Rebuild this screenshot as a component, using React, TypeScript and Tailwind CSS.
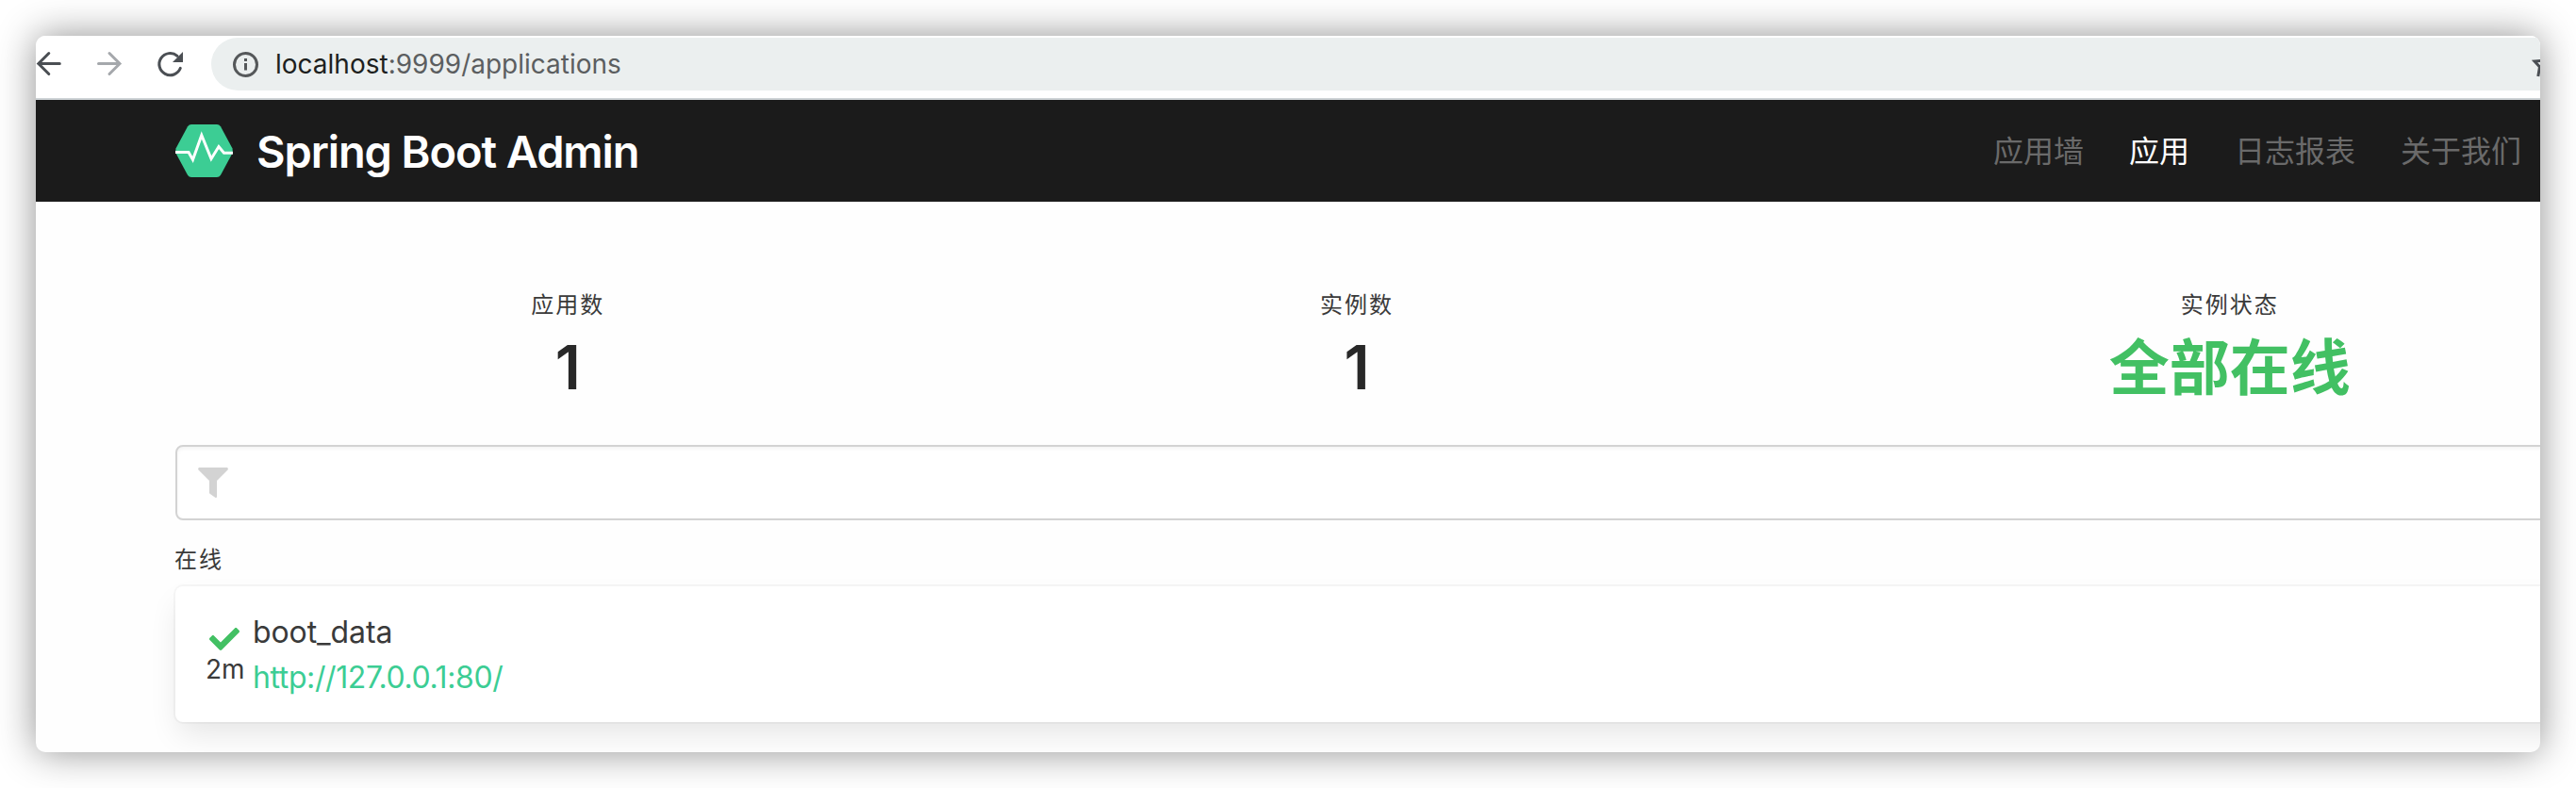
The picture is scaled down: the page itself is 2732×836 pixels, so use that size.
import { FaCheck } from "react-icons/fa";

const stats = [
  { label: "应用数", value: "1" },
  { label: "实例数", value: "1" },
  { label: "实例状态", value: "全部在线", up: true },
];

const links = [
  { label: "应用墙" },
  { label: "应用", active: true },
  { label: "日志报表" },
  { label: "关于我们" },
];

function Toolbar() {
  return (
    <div className="flex h-[68px] shrink-0 border-b-2 border-[#ced3d6] bg-white pt-[2px]">
      <div className="flex h-14 w-[186px] shrink-0 items-center">
        <svg className="h-14 w-[186px]" viewBox="0 0 186 56" fill="none" strokeWidth="3" strokeLinecap="round">
          <g stroke="#4b4f54">
            <path d="M2.800 27.500H25.300M13.800 16.500L2.800 27.500L13.800 38.500" />
            <path d="M153.300 32.300A11.600 11.600 0 1 1 150 19.300" />
          </g>
          <path d="M66.500 27.500H89M78 16.500L89 27.500L78 38.500" stroke="#a5a8ac" />
          <path d="M156 15V26H145Z" fill="#4b4f54" />
        </svg>
      </div>
      <div className="flex h-14 grow items-center rounded-l-[28px] bg-[#ebefef] pl-[22px]">
        <svg className="h-7 w-7 shrink-0" viewBox="0 0 28 28" fill="none" stroke="#55585a" strokeWidth="3">
          <circle cx="14.500" cy="14.500" r="12" />
          <path d="M14.500 13V20.500M14.500 8V11" />
        </svg>
        <div className="ml-[18px] grow text-[28px] leading-none whitespace-nowrap text-[#5b5e60]">
          <span className="text-[#1d1f20]">localhost</span>:9999/applications
        </div>
        <svg className="h-14 w-[10px] shrink-0" viewBox="0 0 10 56" fill="none" stroke="#4b4f54" strokeWidth="3">
          <path d="M12 24.300L4 25L9.500 31L7.800 41" />
        </svg>
      </div>
    </div>
  );
}

function Navbar() {
  return (
    <div className="flex h-[108px] shrink-0 items-center bg-[#1b1b1b] pr-5 pl-[148px]">
      <svg className="h-14 w-[61px]" viewBox="0 0 61 56">
        <path d="M17 0H44Q46.500 0 48 2.300L60.500 25.500Q61 28 60.500 30.500L48 53.700Q46.500 56 44 56H17Q14.500 56 13 53.700L0.500 30.500Q0 28 0.500 25.500L13 2.300Q14.500 0 17 0Z" fill="#3ccd94" />
        <path d="M0 29.500H14L18.500 37.500L27.800 11.500L38 36.500L46 23.500L51.500 30.200H61" fill="none" stroke="#fff" strokeWidth="3" />
      </svg>
      <div className="ml-[25px] text-[47px] leading-none font-semibold tracking-[-1.1px] whitespace-nowrap text-white">Spring Boot Admin</div>
      <div className="ml-auto flex gap-12 pt-[2px] text-[32px] leading-none whitespace-nowrap">
        {links.map((l) => (
          <span key={l.label} className={l.active ? "text-white" : "text-[#6a6a6a]"}>{l.label}</span>
        ))}
      </div>
    </div>
  );
}

export default function App() {
  return (
    <div className="h-[836px] w-[2732px] overflow-hidden bg-white p-[38px] font-['Inter','Noto_Sans_CJK_SC',sans-serif]">
      <div className="flex h-[760px] w-[2656px] flex-col overflow-hidden rounded-[10px] bg-[#fefefe] shadow-[0_0_40px_rgba(0,0,0,0.44)]">
        <Toolbar />
        <Navbar />
        <div className="w-[2836px] pt-24 pl-[148px]">
          <div className="mr-[2px] -ml-[2px] flex">
            {stats.map((s) => (
              <div key={s.label} className="flex flex-auto justify-center text-center">
                <div>
                  <div className="text-2xl leading-7 tracking-[2px] text-[#3a3a3a]">{s.label}</div>
                  <div className={s.up ? "mt-4 h-16 text-[64px] leading-[72px] font-bold text-[#42c063]" : "mt-4 h-16 text-[64px] leading-[72px] font-semibold text-[#282828]"}>{s.value}</div>
                </div>
              </div>
            ))}
          </div>
          <div className="mt-[54px] flex h-20 items-center rounded-lg border-2 border-[#d3d3d3] bg-white pl-[22px] shadow-[inset_0_2px_4px_rgba(10,10,10,0.05)]">
            <svg className="h-8 w-8" viewBox="0 0 32 32" fill="#d3d3d3">
              <path d="M1 0H31Q32.500 1 31.500 2.500L20 14V31.200Q19.600 32.300 18.500 32L12.500 27.800Q12 27.400 12 26.800V14L.5 2.500Q-.5 1 1 0Z" />
            </svg>
          </div>
          <div className="mt-7 -ml-px text-2xl leading-7 tracking-[2px] text-[#3a3a3a]">在线</div>
          <div className="mt-[14px] flex h-[144px] rounded-lg bg-white pl-[33px] shadow-[0_16px_32px_-4px_rgba(10,10,10,0.1),0_0_0_2px_rgba(10,10,10,0.03)]">
            <div className="flex w-[49px] flex-col pt-10">
              <FaCheck className="ml-[3px] h-8 w-8 shrink-0 text-[#42c063]" />
              <div className="-ml-px text-[28px] leading-8 text-[#3a3a3a]">2m</div>
            </div>
            <div className="pt-[25px] text-[32px] leading-[48px]">
              <div className="tracking-[-0.1px] text-[#3a3a3a]">boot_data</div>
              <div className="tracking-[-0.4px] text-[#3ccd94]">http://127.0.0.1:80/</div>
            </div>
          </div>
        </div>
      </div>
    </div>
  );
}
